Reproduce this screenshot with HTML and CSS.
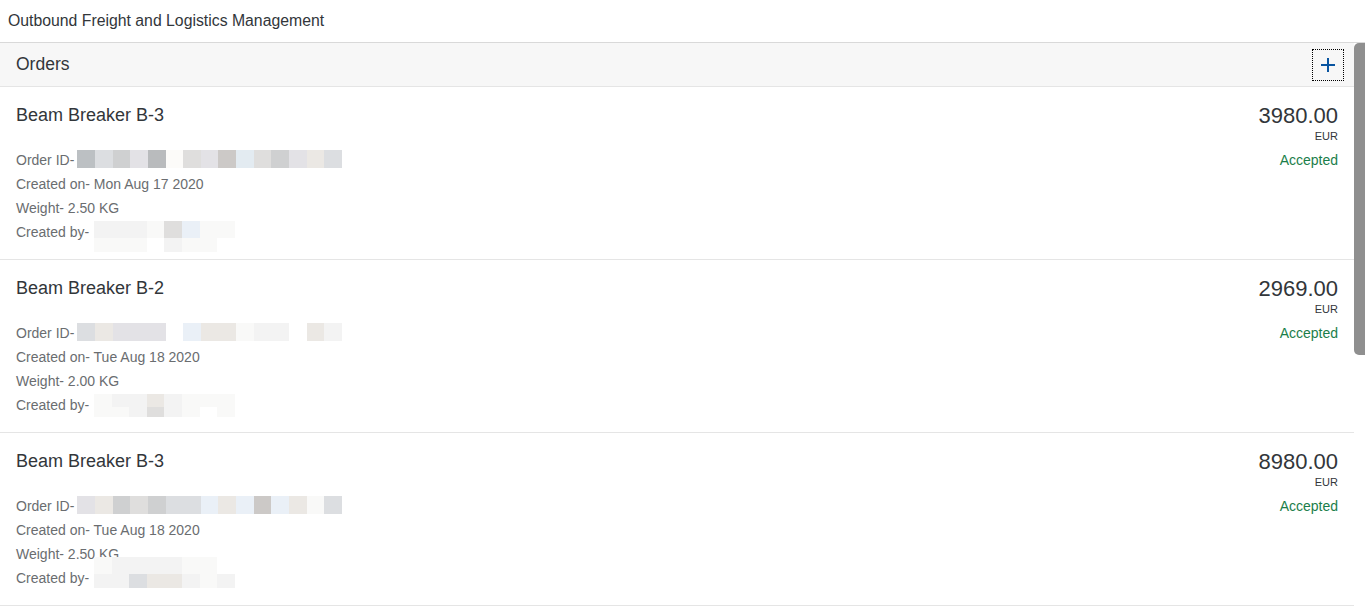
FILE: index.html
```html
<!DOCTYPE html>
<html lang="en">
<head>
<meta charset="utf-8">
<title>Outbound Freight and Logistics Management</title>
<link rel="stylesheet" href="styles.css">
</head>
<body>
<div class="shell">
  <header class="titlebar">Outbound Freight and Logistics Management</header>
  <div class="viewport">
    <main class="content">
      <div class="list-header">
        <span class="list-title">Orders</span>
        <button class="add-btn" aria-label="Add">
          <svg width="16" height="16" viewBox="0 0 16 16"><path d="M8 1v14M1 8h14" stroke="#0854a0" stroke-width="2" fill="none"/></svg>
        </button>
      </div>
      <ul class="items">
        <li class="item">
          <div class="item-main">
            <div class="item-title">Beam Breaker B-3</div>
            <div class="attrs">
              <div class="attr">Order ID- <span class="mosaic mosaic-id"><i class="g1"></i><i class="g3"></i><i class="g2"></i><i class="g4"></i><i class="g0"></i><i class="g11"></i><i class="g10"></i><i class="g4"></i><i class="g9"></i><i class="g8"></i><i class="g10"></i><i class="g2"></i><i class="g4"></i><i class="g5"></i><i class="g3"></i></span></div>
              <div class="attr">Created on- Mon Aug 17 2020</div>
              <div class="attr">Weight- 2.50 KG</div>
              <div class="attr">Created by- <span class="mosaic mosaic-by"><i class="g6"></i><i class="g6"></i><i class="g6"></i><i class="g7"></i><i class="g10"></i><i class="g12"></i><i class="g7"></i><i class="g7"></i><i class="g7"></i><i class="g7"></i><i class="g7"></i><i class="w"></i><i class="g6"></i><i class="g7"></i><i class="g7"></i><i class="w"></i></span></div>
            </div>
          </div>
          <div class="item-side">
            <div class="amount">3980.00</div>
            <div class="unit">EUR</div>
            <div class="status">Accepted</div>
          </div>
        </li>
        <li class="item">
          <div class="item-main">
            <div class="item-title">Beam Breaker B-2</div>
            <div class="attrs">
              <div class="attr">Order ID- <span class="mosaic mosaic-id"><i class="g3"></i><i class="g5"></i><i class="g4"></i><i class="g4"></i><i class="g4"></i><i class="w"></i><i class="g12"></i><i class="g5"></i><i class="g5"></i><i class="g7"></i><i class="g6"></i><i class="g6"></i><i class="w"></i><i class="g5"></i><i class="g6"></i></span></div>
              <div class="attr">Created on- Tue Aug 18 2020</div>
              <div class="attr">Weight- 2.00 KG</div>
              <div class="attr">Created by- <span class="mosaic mosaic-by short"><i class="g7"></i><i class="g6"></i><i class="g6"></i><i class="g5"></i><i class="g6"></i><i class="g7"></i><i class="g7"></i><i class="g7"></i><i class="g7"></i><i class="g7"></i><i class="g6"></i><i class="g10"></i><i class="g6"></i><i class="g7"></i><i class="w"></i><i class="g7"></i></span></div>
            </div>
          </div>
          <div class="item-side">
            <div class="amount">2969.00</div>
            <div class="unit">EUR</div>
            <div class="status">Accepted</div>
          </div>
        </li>
        <li class="item">
          <div class="item-main">
            <div class="item-title">Beam Breaker B-3</div>
            <div class="attrs">
              <div class="attr">Order ID- <span class="mosaic mosaic-id"><i class="g4"></i><i class="g5"></i><i class="g2"></i><i class="g10"></i><i class="g2"></i><i class="g3"></i><i class="g3"></i><i class="g12"></i><i class="g5"></i><i class="g12"></i><i class="g9"></i><i class="g12"></i><i class="g5"></i><i class="g7"></i><i class="g3"></i></span></div>
              <div class="attr">Created on- Tue Aug 18 2020</div>
              <div class="attr">Weight- 2.50 KG</div>
              <div class="attr">Created by- <span class="mosaic mosaic-by raised"><i class="g7"></i><i class="g6"></i><i class="g6"></i><i class="g6"></i><i class="g6"></i><i class="g7"></i><i class="g7"></i><i class="w"></i><i class="g6"></i><i class="g6"></i><i class="g3"></i><i class="g5"></i><i class="g5"></i><i class="g6"></i><i class="g7"></i><i class="g6"></i></span></div>
            </div>
          </div>
          <div class="item-side">
            <div class="amount">8980.00</div>
            <div class="unit">EUR</div>
            <div class="status">Accepted</div>
          </div>
        </li>
      </ul>
    </main>
    <div class="scrollbar" aria-hidden="true"><div class="scroll-thumb"></div></div>
  </div>
</div>
</body>
</html>
```

FILE: styles.css
```css
* { box-sizing: border-box; }

html, body {
  margin: 0;
  padding: 0;
  height: 100%;
  background: #ffffff;
  font-family: "Liberation Sans", Arial, sans-serif;
  color: #32363a;
}

.shell {
  display: flex;
  flex-direction: column;
  height: 100vh;
}

.titlebar {
  flex: 0 0 43px;
  display: flex;
  align-items: center;
  padding: 0 8px;
  font-size: 15.8px;
  color: #32363a;
  border-bottom: 1px solid #d9d9d9;
  background: #ffffff;
}

.viewport {
  flex: 1 1 auto;
  display: flex;
  min-height: 0;
  overflow: hidden;
}

.content {
  flex: 1 1 auto;
  min-width: 0;
}

.scrollbar {
  flex: 0 0 11px;
  background: #ffffff;
}

.scroll-thumb {
  height: 312px;
  background: #8f8f8f;
  border-radius: 5px 0 0 5px;
}

.list-header {
  height: 44px;
  display: flex;
  align-items: center;
  justify-content: space-between;
  padding: 0 10px 0 16px;
  background: #f7f7f7;
  border-bottom: 1px solid #e5e5e5;
}

.list-title {
  font-size: 17.5px;
  color: #32363a;
}

.add-btn {
  width: 32px;
  height: 32px;
  margin-top: 1px;
  display: flex;
  align-items: center;
  justify-content: center;
  padding: 0;
  background: transparent;
  border: 1px dotted #000000;
  cursor: pointer;
}

.items {
  list-style: none;
  margin: 0;
  padding: 0;
}

.item {
  display: flex;
  justify-content: space-between;
  padding: 16px 16px 15px;
  border-bottom: 1px solid #e5e5e5;
}

.item-title {
  font-size: 18px;
  line-height: 24px;
  color: #32363a;
}

.attrs {
  margin-top: 21px;
}

.attr {
  font-size: 14px;
  line-height: 24px;
  color: #6a6d70;
  white-space: nowrap;
}

.item-side {
  display: flex;
  flex-direction: column;
  align-items: flex-end;
}

.amount {
  font-size: 22px;
  line-height: 26px;
  color: #32363a;
}

.unit {
  font-size: 11px;
  line-height: 14px;
  color: #32363a;
}

.status {
  font-size: 14px;
  line-height: 24px;
  margin-top: 5px;
  color: #1b7e4a;
}

/* pixelated placeholders standing in for redacted values */
.mosaic {
  display: inline-grid;
  vertical-align: top;
}
.mosaic i {
  display: block;
}
.mosaic-id {
  grid-template-columns: repeat(15, 17.67px);
  grid-template-rows: 18px;
  margin-top: 2px;
  margin-left: -1px;
}
.mosaic-by {
  grid-template-columns: repeat(8, 17.6px);
  grid-template-rows: 17px 14px;
  margin-left: 1px;
  margin-top: 1px;
  margin-bottom: -8px;
}
.mosaic-by.short {
  grid-template-rows: 13px 10px;
  margin-bottom: -1px;
}
.mosaic-by.raised {
  position: relative;
  top: -10px;
}

.g0 { background: #b9bbbd; }
.g1 { background: #bcc0c3; }
.g2 { background: #cfd0d1; }
.g3 { background: #dcdee1; }
.g4 { background: #e3e2e6; }
.g5 { background: #ebe8e4; }
.g6 { background: #f3f3f3; }
.g7 { background: #f9f9f8; }
.g8 { background: #e3ebf1; }
.g9 { background: #ccc9c7; }
.g10 { background: #dfdedd; }
.g11 { background: #fcfbf9; }
.g12 { background: #eaf0f7; }
.w { background: #ffffff; }
```
